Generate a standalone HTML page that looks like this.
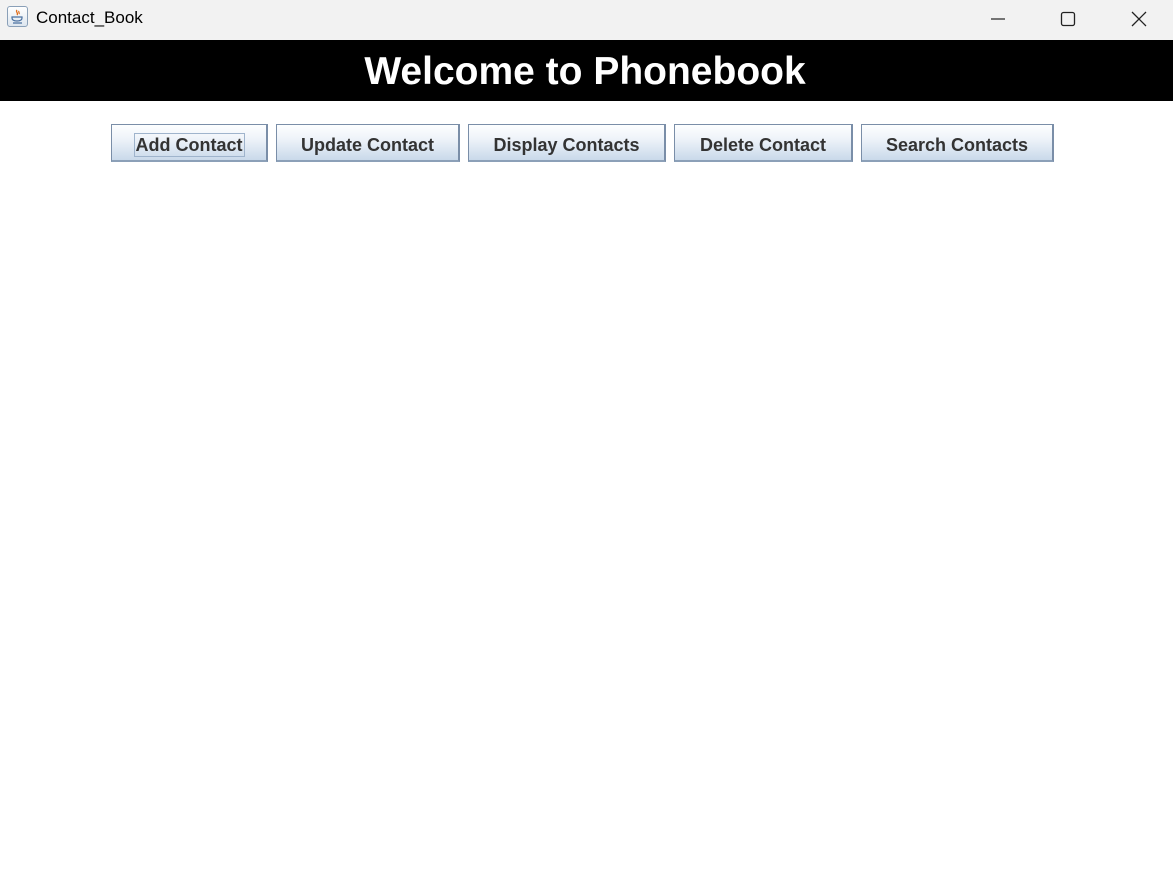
<!DOCTYPE html>
<html><head><style>
body{margin:0;width:1173px;height:880px;background:#fff;position:relative;overflow:hidden;font-family:"Liberation Sans",sans-serif}
.tb{position:absolute;left:0;top:0;width:1173px;height:40px;background:#f2f2f2}
.tb .t{position:absolute;left:36px;top:8px;font-size:17px;color:#000}
.ico{position:absolute;left:7px;top:6px;width:21px;height:21px;border:1px solid #8aa0b8;border-radius:3px;background:linear-gradient(#fff,#dde6ef);box-sizing:border-box}
.hd{position:absolute;left:0;top:40px;width:1173px;height:61px;background:#000;color:#fff;font-weight:bold;font-size:39px;text-align:center;line-height:63px;text-indent:-3px}
.b{position:absolute;top:124px;height:38px;box-sizing:border-box;border:1px solid #7a8ea8;border-right:2px solid #7a8ea8;border-bottom:2px solid #8ca0b8;background:linear-gradient(#fdfeff 0%,#eef3f9 40%,#c9d9ea 100%);font-weight:bold;font-size:18px;color:#333;text-align:center;line-height:40px}
.f{border:1px solid #9fb4cc;padding:0 1px;line-height:22px;display:inline-block}
</style></head><body>
<div class="tb"><div class="ico"><svg width="19" height="19" viewBox="0 0 19 19"><path d="M9 3c-2 2 2 3 0 5M11 4c-1 1 1 2 0 3" stroke="#e07020" stroke-width="1.3" fill="none"/><path d="M4 10h10v1c0 2-2 3-5 3s-5-1-5-3z M5 16h9" stroke="#4a70a0" stroke-width="1.2" fill="none"/></svg></div><div class="t">Contact_Book</div>
<svg style="position:absolute;left:985px;top:8px" width="180" height="24"><path d="M6 11h14" stroke="#222" stroke-width="1.2"/><rect x="76.5" y="4.5" width="13" height="13" rx="2" fill="none" stroke="#222" stroke-width="1.3"/><path d="M147 4l14 14M161 4l-14 14" stroke="#222" stroke-width="1.3"/></svg></div>
<div class="hd">Welcome to Phonebook</div>
<div class="b" style="left:111px;width:157px"><span class="f">Add Contact</span></div>
<div class="b" style="left:276px;width:184px">Update Contact</div>
<div class="b" style="left:468px;width:198px">Display Contacts</div>
<div class="b" style="left:674px;width:179px">Delete Contact</div>
<div class="b" style="left:861px;width:193px">Search Contacts</div>
</body></html>
